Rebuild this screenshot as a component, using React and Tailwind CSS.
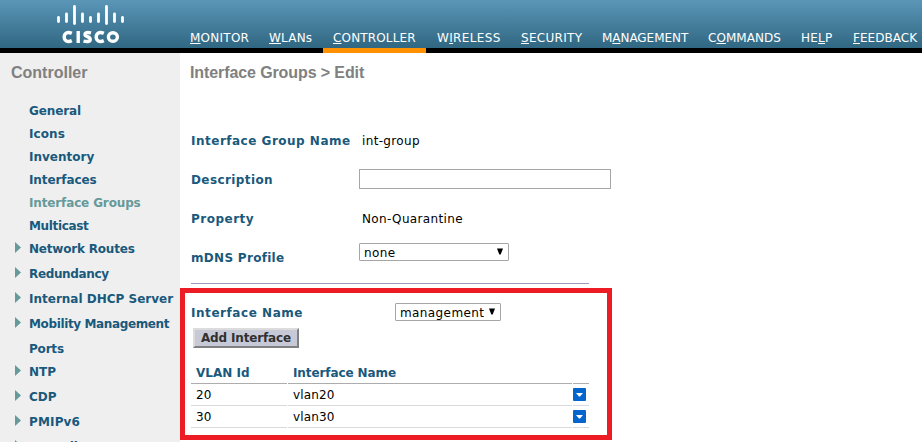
const nav = [
  ["", "M", "ONITOR", "ml-[190px] w-[79px] tracking-[0.25px]"],
  ["", "W", "LANs", "w-[64px] tracking-[0.2px]"],
  ["", "C", "ONTROLLER", "w-[104px] tracking-[0.15px]"],
  ["W", "I", "RELESS", "w-[84px] tracking-[0.35px]"],
  ["", "S", "ECURITY", "w-[81px] tracking-[0.3px]"],
  ["M", "A", "NAGEMENT", "w-[106px] tracking-[-0.05px]"],
  ["C", "O", "MMANDS", "w-[93px] tracking-[0.05px]"],
  ["HE", "L", "P", "w-[52px] tracking-[0.25px]"],
  ["", "F", "EEDBACK", "w-[69px] tracking-[0.05px]"],
];

const menu = [
  ["General", false, "tracking-[-0.1px]"],
  ["Icons", false, "tracking-[0.1px]"],
  ["Inventory", false, ""],
  ["Interfaces", false, "tracking-[-0.1px]"],
  ["Interface Groups", false, "tracking-[-0.14px]"],
  ["Multicast", false, "tracking-[-0.35px]"],
  ["Network Routes", true, "tracking-[-0.2px]"],
  ["Redundancy", true, "tracking-[-0.35px]"],
  ["Internal DHCP Server", true, ""],
  ["Mobility Management", true, "tracking-[-0.37px]"],
  ["Ports", false, "tracking-[-0.2px]"],
  ["NTP", true, ""],
  ["CDP", true, ""],
  ["PMIPv6", true, "tracking-[0.15px]"],
  ["Tunneling", true, ""],
];

const bars = [
  [58.5, 17.5, 21.5], [66.5, 14, 21.5], [74.5, 6.5, 23.5], [82.5, 14, 21.5], [90.5, 17.5, 21.5],
  [98.5, 14, 21.5], [106.5, 6.5, 23.5], [114.5, 14, 21.5], [122.5, 17.5, 21.5],
];

function Logo() {
  return (
    <svg className="absolute left-0 top-0" width="140" height="48">
      {bars.map(([x, a, b]) => (
        <line key={x} x1={x} x2={x} y1={a} y2={b} stroke="#fff" strokeWidth="2.8" strokeLinecap="round" />
      ))}
      <g fill="none" stroke="#fff" strokeWidth="3.4">
        <path d="M71.8 33.4C67.5 31.4 64.2 33.2 64.2 37S67.5 42.6 71.8 40.6" />
        <path d="M78.2 31V43" />
        <path d="M91 32.9C87.4 32.2 85 32.4 85 34.4C85 37 90.2 36.4 90.2 39.4C90.2 41.9 86.8 41.8 83.5 41.1" />
        <path d="M103.8 33.4C99.5 31.4 96.2 33.2 96.2 37S99.5 42.6 103.8 40.6" />
        <ellipse cx="112.9" cy="37" rx="4.5" ry="4.3" />
      </g>
    </svg>
  );
}

function Select({ children, className }) {
  return (
    <div className={`flex h-[18px] items-center justify-between rounded-[1px] border border-[#a6a6a6] bg-white pl-1 pr-[5px] tracking-[0.4px] ${className}`}>
      <span className="pt-px">{children}</span>
      <svg className="-mt-px" width="6" height="7"><path d="M0 0.5H6L3.7 6.5H2.3Z" fill="#000" /></svg>
    </div>
  );
}

function Label({ children, className = "" }) {
  return <span className={`font-bold text-[#19597c] ${className}`}>{children}</span>;
}

function Row({ id, name }) {
  return (
    <div className="flex h-[22px] gap-px leading-[23px] tracking-[0.15px]">
      <div className="w-24 border-b border-[#d9d9d9] pl-[5px]">{id}</div>
      <div className="w-[284px] border-b border-[#d9d9d9] pl-[5px]">{name}</div>
      <div className="w-4 border-b border-[#d9d9d9] pt-1">
        <svg width="13" height="13"><rect width="13" height="13" rx="1" fill="#0466cc" /><path d="M3 5H10L7 8.5H6Z" fill="#fff" /></svg>
      </div>
    </div>
  );
}

export default function App() {
  return (
    <div className="flex h-[442px] w-[922px] flex-col overflow-hidden bg-white font-['DejaVu_Sans',Verdana,sans-serif] text-[12px] text-black">
      <header className="relative h-[53px] shrink-0 border-b-[5px] border-black bg-[linear-gradient(#5b96b7,#306782)]">
        <Logo />
        <nav className="flex h-[53px] pt-[28px] leading-[21px] text-white">
          {nav.map(([a, b, c, cls]) => (
            <a key={b + c} className={`relative shrink-0 whitespace-nowrap ${cls}`}>
              {a}<span className="underline decoration-1 underline-offset-1">{b}</span>{c}
              {c === "ONTROLLER" && <i className="absolute -left-[10px] top-[20px] h-[5px] w-[103px] bg-[#ff9000]" />}
            </a>
          ))}
        </nav>
      </header>
      <div className="flex min-h-0 flex-1">
        <aside className="w-[180px] shrink-0 overflow-hidden bg-[#efefef]">
          <h2 className="h-[46px] pl-[11px] pt-[10px] font-['Liberation_Sans',Arial,sans-serif] text-[16px] font-bold leading-5 text-[#808080]">Controller</h2>
          {menu.map(([t, arrow, cls]) => (
            <div key={t} className={`flex whitespace-nowrap font-bold leading-[25px] ${arrow ? "h-[25px]" : "h-[23px]"} ${t === "Interface Groups" ? "text-[#669999]" : "text-[#19597c]"}`}>
              <span className="w-[29px] shrink-0 pl-[15px] pt-[5px]">
                {arrow && <svg width="6" height="11"><path d="M0 0L6 5.5L0 11Z" fill="#669999" /></svg>}
              </span>
              <span className={cls}>{t}</span>
            </div>
          ))}
        </aside>
        <main className="flex flex-col items-start">
          <h1 className="h-[67px] pl-[10px] pt-[10px] font-['Liberation_Sans',Arial,sans-serif] text-[16px] font-bold leading-5 tracking-[-0.1px] text-[#808080]">Interface Groups &gt; Edit</h1>
          <div className="flex h-[39px] items-center pl-[11px]"><Label className="w-[171px] pt-0.5 tracking-[0.5px]">Interface Group Name</Label><span className="pt-0.5 tracking-[0.35px]">int-group</span></div>
          <div className="flex h-[39px] items-center pl-[11px]"><Label className="w-[168px] pt-0.5 tracking-[0.4px]">Description</Label><div className="h-5 w-[252px] border border-[#a6a6a6]" /></div>
          <div className="flex h-[39px] items-center pl-[11px]"><Label className="w-[171px] pt-0.5 tracking-[0.5px]">Property</Label><span className="pt-0.5 tracking-[0.35px]">Non-Quarantine</span></div>
          <div className="flex h-[40px] items-start pl-[11px] pt-1"><Label className="w-[168px] pt-2 tracking-[0.3px]">mDNS Profile</Label><Select className="mt-[2px] w-[150px]">none</Select></div>
          <div className="ml-[11px] mt-[6px] h-px w-[398px] bg-[#9c9ab8]" />
          <section className="mt-1 h-[152px] w-[432px] border-[5px] border-[#ed1c24] pl-[6px] pt-[10px]">
            <div className="flex h-[18px] items-center"><Label className="w-[204px] pt-px tracking-[0.55px]">Interface Name</Label><Select className="w-[106px]">management</Select></div>
            <button className="ml-[2px] mt-[7px] block h-5 w-[106px] border-2 border-b-[#808080] border-l-[#dcdcdc] border-r-[#808080] border-t-[#dcdcdc] bg-[#c8c9d6] text-center font-bold leading-[17px] tracking-[-0.15px] text-[#303030]">Add Interface</button>
            <div className="mt-[13px] flex h-[23px] gap-px leading-[25px]">
              <div className="w-24 border-b border-[#adadad] pl-[5px]"><Label>VLAN Id</Label></div>
              <div className="w-[284px] border-b border-[#adadad] pl-[5px]"><Label className="tracking-[-0.1px]">Interface Name</Label></div>
              <div className="w-4 border-b border-[#adadad]" />
            </div>
            <Row id="20" name="vlan20" />
            <Row id="30" name="vlan30" />
          </section>
        </main>
      </div>
    </div>
  );
}
